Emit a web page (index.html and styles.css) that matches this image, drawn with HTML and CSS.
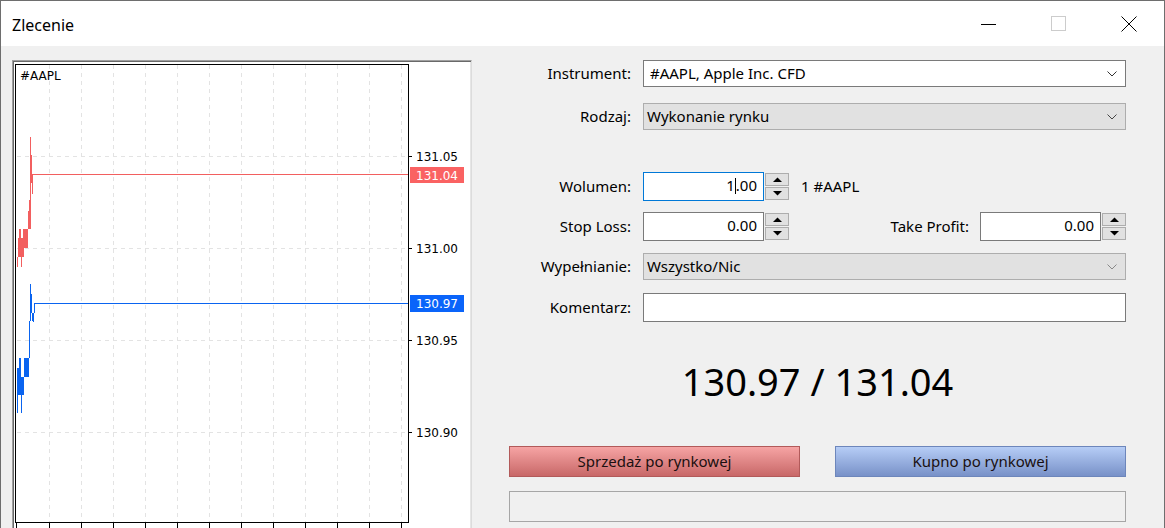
FILE: index.html
```html
<!DOCTYPE html>
<html lang="pl">
<head>
<meta charset="utf-8">
<title>Zlecenie</title>
<link rel="stylesheet" href="styles.css">
</head>
<body>
<div class="window">
  <div class="titlebar">
    <span class="title">Zlecenie</span>
    <div class="controls">
      <span class="ctl"><svg width="16" height="16" viewBox="0 0 16 16"><path d="M0 8.5H15" stroke="#000" stroke-width="1"/></svg></span>
      <span class="ctl"><svg width="16" height="16" viewBox="0 0 16 16"><rect x="0.5" y="0.5" width="14" height="14" fill="none" stroke="#cccccc"/></svg></span>
      <span class="ctl"><svg width="16" height="16" viewBox="0 0 16 16"><path d="M0.5 0.5L15.5 15.5M15.5 0.5L0.5 15.5" stroke="#000" stroke-width="1"/></svg></span>
    </div>
  </div>
  <div class="content">
    <div class="chart-panel">
      <svg class="chart" width="456" height="470" viewBox="14 62 456 470" shape-rendering="crispEdges">
        <rect x="14" y="62" width="456" height="470" fill="#fff"/>
        <g stroke="#e3e3e3" stroke-width="1" stroke-dasharray="4 4">
          <path d="M49.5 65V522M81.5 65V522M113.5 65V522M145.5 65V522M177.5 65V522M209.5 65V522M241.5 65V522M273.5 65V522M305.5 65V522M337.5 65V522M369.5 65V522M401.5 65V522"/>
          <path d="M17 156.5H408M17 248.5H408M17 340.5H408M17 432.5H408"/>
        </g>
        <rect x="15.5" y="64.5" width="393" height="458" fill="none" stroke="#000"/>
        <g stroke="#000">
          <path d="M409 156.5H412M409 248.5H412M409 340.5H412M409 432.5H412"/>
          <path d="M16.5 523V528M49.5 523V528M81.5 523V528M113.5 523V528M145.5 523V528M177.5 523V528M209.5 523V528M241.5 523V528M273.5 523V528M305.5 523V528M337.5 523V528M369.5 523V528M401.5 523V528"/>
        </g>
        <path stroke="#f25f5f" fill="none" d="M17.5 267V257M18.5 257V238M19.5 229V257M20.5 229V257M21.5 238V267M22.5 238V257M23.5 229V257M24.5 229V248M25.5 229V248M26.5 229V248M27.5 229V248M28.5 211V229M29.5 200V229M30.5 137V229M31.5 155V183M32.5 174V194M33 174.5H408"/>
        <path stroke="#0a64f0" fill="none" d="M17.5 368V413M18.5 368V395M19.5 358V395M20.5 358V395M21.5 377V413M22.5 377V395M23.5 377V395M24.5 358V377M25.5 358V377M26.5 358V377M27.5 358V377M28.5 358V377M29.5 321V358M30.5 284V321M31.5 294V313M32.5 313V321M33.5 313V322M34.5 303V313M34 303.5H408"/>
        <text class="sym" x="20" y="80">#AAPL</text>
        <text class="axis" x="416" y="160.5">131.05</text>
        <rect x="410" y="167" width="54" height="16" fill="#fa6262"/>
        <text class="axis light" x="416" y="179.5">131.04</text>
        <text class="axis" x="416" y="252.5">131.00</text>
        <rect x="410" y="295" width="54" height="17" fill="#0a64fa"/>
        <text class="axis light" x="416" y="308">130.97</text>
        <text class="axis" x="416" y="344.5">130.95</text>
        <text class="axis" x="416" y="436.5">130.90</text>
      </svg>
    </div>
    <div class="form">
      <div class="row row-instrument">
        <span class="lbl">Instrument:</span>
        <div class="combo"><span class="combo-text">#AAPL, Apple Inc. CFD</span><svg class="chev" width="10" height="6" viewBox="0 0 10 6"><path d="M0.5 0.5L5 5L9.5 0.5" fill="none" stroke="#333"/></svg></div>
      </div>
      <div class="row row-type">
        <span class="lbl">Rodzaj:</span>
        <div class="combo disabled"><span class="combo-text">Wykonanie rynku</span><svg class="chev" width="10" height="6" viewBox="0 0 10 6"><path d="M0.5 0.5L5 5L9.5 0.5" fill="none" stroke="#444"/></svg></div>
      </div>
      <div class="row row-volume">
        <span class="lbl">Wolumen:</span>
        <div class="num focus">1<span class="caret"></span>.00</div>
        <div class="spin">
          <span class="spin-btn"><svg width="9" height="5" viewBox="0 0 9 5"><path d="M0 5L4.5 0.5L9 5Z" fill="#000"/></svg></span>
          <span class="spin-btn"><svg width="9" height="5" viewBox="0 0 9 5"><path d="M0 0L4.5 4.5L9 0Z" fill="#000"/></svg></span>
        </div>
        <span class="unit">1 #AAPL</span>
      </div>
      <div class="row row-sl">
        <span class="lbl">Stop Loss:</span>
        <div class="num">0.00</div>
        <div class="spin">
          <span class="spin-btn"><svg width="9" height="5" viewBox="0 0 9 5"><path d="M0 5L4.5 0.5L9 5Z" fill="#000"/></svg></span>
          <span class="spin-btn"><svg width="9" height="5" viewBox="0 0 9 5"><path d="M0 0L4.5 4.5L9 0Z" fill="#000"/></svg></span>
        </div>
        <span class="lbl-tp">Take Profit:</span>
        <div class="num">0.00</div>
        <div class="spin">
          <span class="spin-btn"><svg width="9" height="5" viewBox="0 0 9 5"><path d="M0 5L4.5 0.5L9 5Z" fill="#000"/></svg></span>
          <span class="spin-btn"><svg width="9" height="5" viewBox="0 0 9 5"><path d="M0 0L4.5 4.5L9 0Z" fill="#000"/></svg></span>
        </div>
      </div>
      <div class="row row-fill">
        <span class="lbl">Wypełnianie:</span>
        <div class="combo disabled"><span class="combo-text">Wszystko/Nic</span><svg class="chev" width="10" height="6" viewBox="0 0 10 6"><path d="M0.5 0.5L5 5L9.5 0.5" fill="none" stroke="#888"/></svg></div>
      </div>
      <div class="row row-comment">
        <span class="lbl">Komentarz:</span>
        <div class="text-input"></div>
      </div>
      <div class="quote">130.97 / 131.04</div>
      <div class="buttons">
        <button class="btn sell">Sprzedaż po rynkowej</button>
        <button class="btn buy">Kupno po rynkowej</button>
      </div>
      <div class="status"></div>
    </div>
  </div>
</div>
</body>
</html>
```

FILE: styles.css
```css
* { box-sizing: border-box; }
html, body { margin: 0; padding: 0; }
body {
  width: 1165px;
  height: 528px;
  overflow: hidden;
  background: #f0f0f0;
  font-family: "Noto Sans", "Open Sans", sans-serif;
  font-size: 15px;
  color: #000;
}
.window {
  width: 1165px;
  height: 528px;
  border: 1px solid #6e6e6e;
  border-bottom: none;
  background: #f0f0f0;
  overflow: hidden;
}
.titlebar {
  height: 45px;
  background: #fff;
  display: flex;
  align-items: center;
  justify-content: space-between;
}
.title {
  padding-left: 11px;
  font-size: 16px;
  margin-top: 2px;
}
.controls {
  display: flex;
  height: 45px;
}
.ctl {
  width: 70px;
  display: flex;
  align-items: center;
  justify-content: center;
}
.ctl svg { display: block; }
.content {
  display: flex;
  align-items: flex-start;
}
.chart-panel {
  margin-left: 11px;
  margin-top: 14px;
  width: 460px;
  height: 480px;
  border-top: 1px solid #a0a0a0;
  border-left: 1px solid #a0a0a0;
  border-right: 1px solid #dcdcdc;
  box-shadow: inset 1px 1px 0 #696969, inset -1px 0 0 #e6e6e6;
  padding: 1px 1px 0 1px;
  background: #fff;
}
.chart { display: block; }
.chart text {
  font-family: "DejaVu Sans", sans-serif;
  font-size: 12px;
  fill: #000;
}
.chart text.light { fill: #fff; }
.form {
  margin-left: 37px;
  width: 617px;
  display: flex;
  flex-direction: column;
}
.row {
  display: flex;
  align-items: center;
}
.lbl {
  width: 122px;
  text-align: right;
  margin-right: 12px;
  margin-bottom: 2px;
  flex: none;
}
.row-instrument { margin-top: 14px; height: 27px; }
.row-type { margin-top: 16px; height: 27px; }
.row-volume { margin-top: 42px; height: 29px; }
.row-sl { margin-top: 11px; height: 29px; }
.row-fill { margin-top: 12px; height: 27px; }
.row-comment { margin-top: 13px; height: 29px; }
.combo {
  flex: 1;
  height: 27px;
  background: #fff;
  border: 1px solid #7a7a7a;
  display: flex;
  align-items: center;
  justify-content: space-between;
  padding: 0 8px 0 6px;
}
.combo-text { margin-bottom: 2px; }
.combo.disabled {
  background: #e1e1e1;
  border-color: #adadad;
  padding-left: 3px;
}
.chev { display: block; }
.num {
  width: 121px;
  height: 29px;
  background: #fff;
  border: 1px solid #7a7a7a;
  text-align: right;
  padding-right: 6px;
  line-height: 25px;
  flex: none;
}
.num.focus { border-color: #0078d7; }
.caret {
  display: inline-block;
  width: 0;
  height: 16px;
  border-left: 1px solid #000;
  vertical-align: -3px;
}
.spin {
  margin-left: 1px;
  width: 24px;
  height: 29px;
  display: flex;
  flex-direction: column;
  justify-content: space-between;
  padding: 1px 0 1px;
  flex: none;
}
.spin-btn {
  height: 13px;
  background: #e1e1e1;
  border: 1px solid #adadad;
  display: flex;
  align-items: center;
  justify-content: center;
}
.spin-btn svg { display: block; }
.unit { margin-left: 12px; margin-bottom: 2px; }
.lbl-tp {
  flex: 1;
  text-align: right;
  margin-right: 11px;
  margin-bottom: 2px;
}
.text-input {
  flex: 1;
  height: 29px;
  background: #fff;
  border: 1px solid #7a7a7a;
}
.quote {
  margin-top: 34px;
  height: 50px;
  line-height: 50px;
  text-align: center;
  font-size: 38px;
}
.buttons {
  margin-top: 40px;
  display: flex;
  justify-content: space-between;
}
.btn {
  width: 291px;
  height: 31px;
  font-family: inherit;
  font-size: 15px;
  color: #1a1010;
  padding: 0 0 2px;
  border: 1px solid;
  border-radius: 0;
}
.btn.sell {
  background: linear-gradient(#f6a4a4, #c86868);
  border-color: #b25a5a;
}
.btn.buy {
  background: linear-gradient(#b6cdf6, #7891c8);
  border-color: #6d86bb;
}
.status {
  margin-top: 14px;
  height: 31px;
  border: 1px solid #a6a6a6;
  background: #f0f0f0;
}
```
